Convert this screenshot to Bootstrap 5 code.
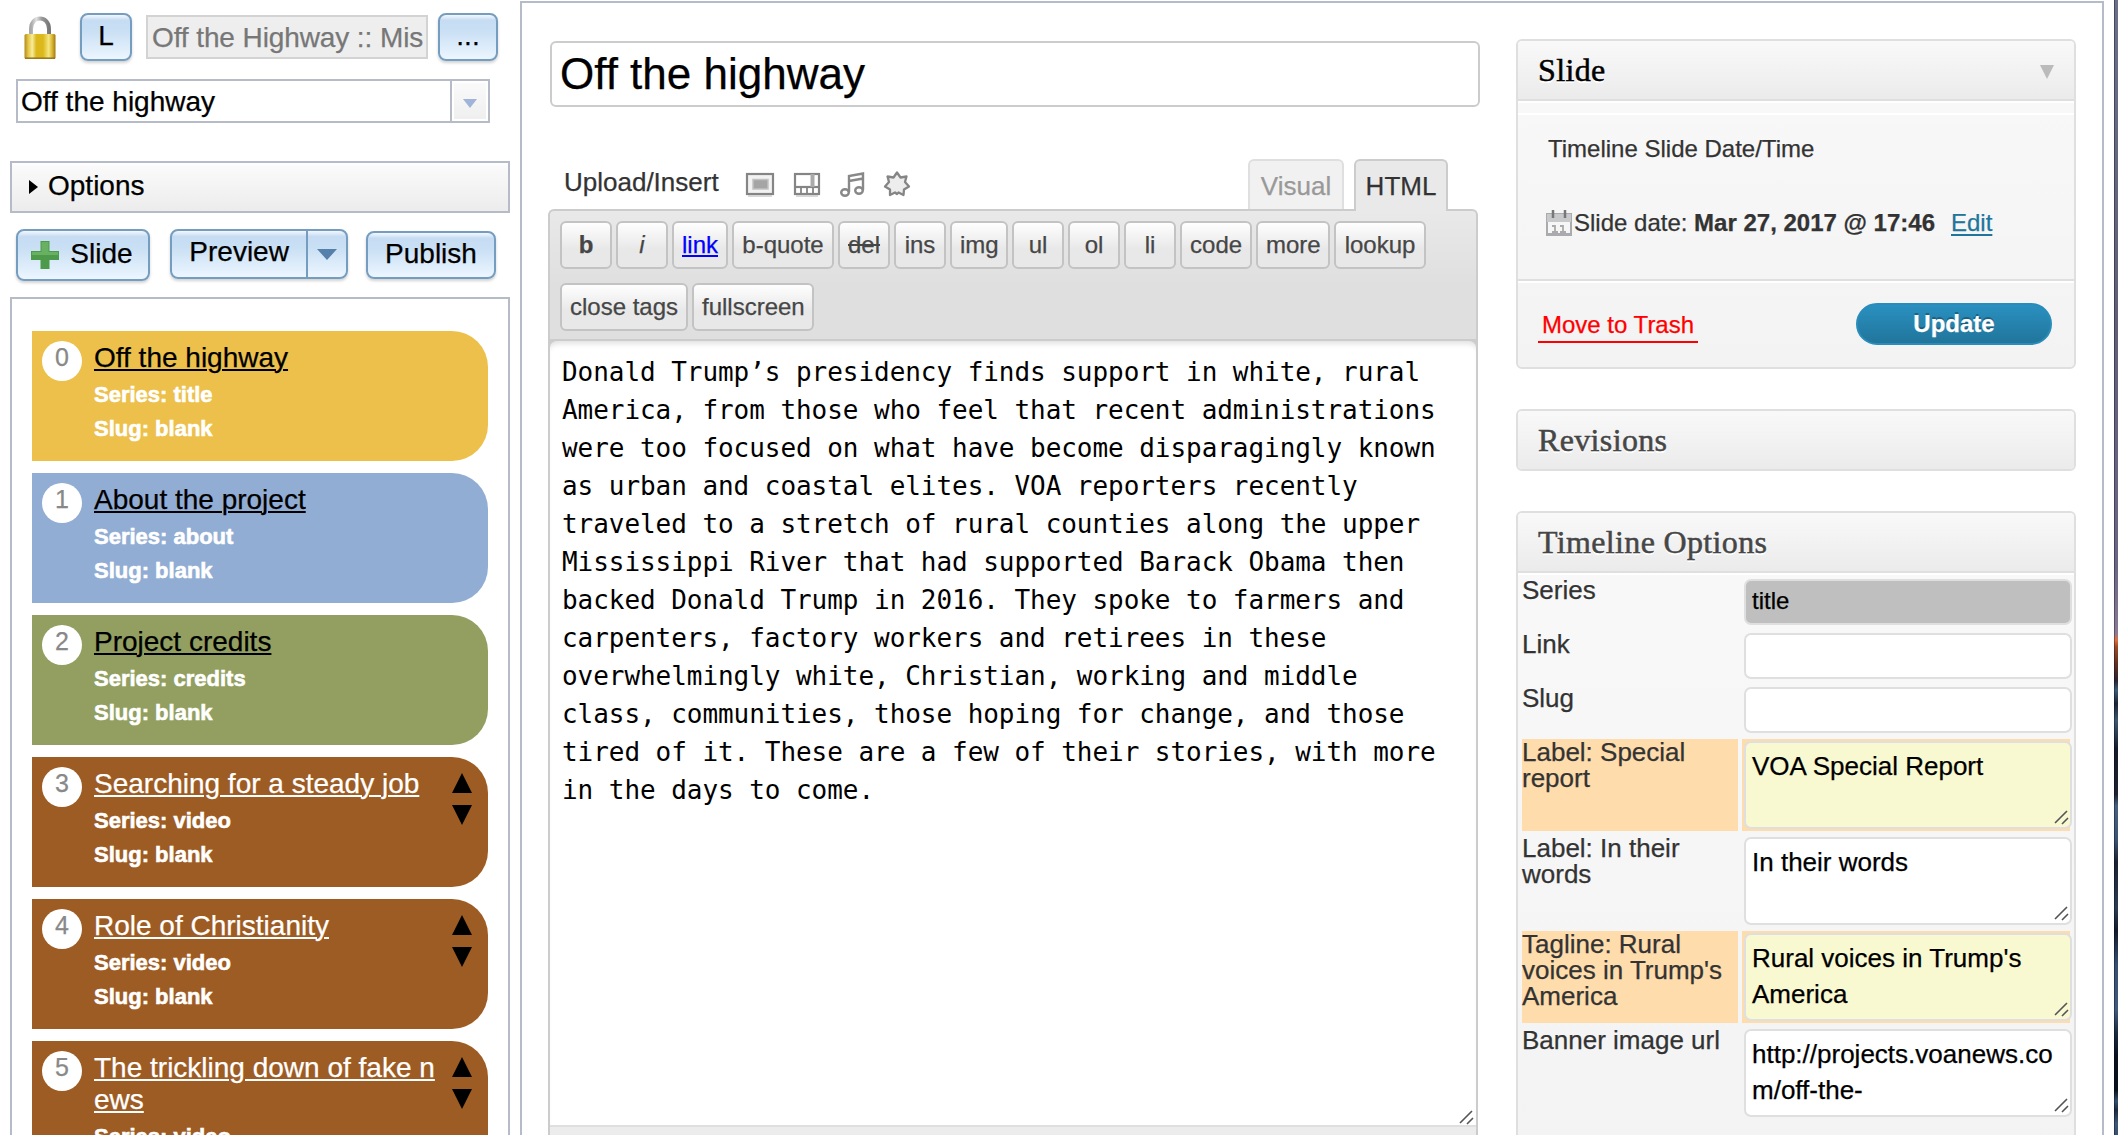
<!DOCTYPE html>
<html lang="en">
<head>
<meta charset="utf-8">
<title>Off the highway</title>
<link href="https://cdn.jsdelivr.net/npm/bootstrap@5.3.0/dist/css/bootstrap.min.css" rel="stylesheet">
<style>
html,body{height:1135px;overflow:hidden}
body{font-family:"Liberation Sans",Arial,sans-serif;color:#333;background:#fff;font-size:26px;line-height:1.2;-webkit-text-stroke:.25px}
svg{display:block;flex:none}
.side{width:520px;flex:none;color:#000;font-size:28px;line-height:32px}
.dj{display:flex;align-items:center;justify-content:center;flex:none;height:48px;border:2px solid #759dc0;border-radius:8px;padding:0 0 3px;font-size:28px;line-height:32px;color:#000;background:linear-gradient(#f4f8fd 0,#c5dcf3 12%,#c9dff4 35%,#ecf6ff 100%);box-shadow:0 2px 3px rgba(0,0,0,.18)}
.toprow{margin:13px 0 0 24px;height:48px}
.bound{border:2px solid #b5bcc7;border-radius:0}
.proj{width:282px;height:44px;margin:0 10px 0 14px;padding:1px 0 0 4px;border:2px solid #d3d3d3;background:#eee;color:#777;overflow:hidden;white-space:nowrap;line-height:40px;letter-spacing:-.1px}
.combo{width:474px;height:44px;margin:18px 0 0 16px}
.combo .val{padding-left:3px;line-height:42px}
.combo .arr{width:38px;border-left:2px solid #b5bcc7;padding:2px}
.combo .arr span{background:linear-gradient(#fafafa,#efefef);display:flex;width:100%;height:100%;align-items:center;justify-content:center}
.optbar{width:500px;height:52px;margin:38px 0 0 10px;padding:0 0 3px 17px;background:linear-gradient(#fff 0,#fafafa 8%,#ececec 100%)}
.actions{margin:16px 0 0 16px;height:52px}
.slides{width:500px;margin:16px 0 0 10px;padding:32px 20px 0;height:840px;border:2px solid #b5bcc7;gap:12px}
.slide-item{width:456px;height:130px;flex:none;border-radius:0 36px 36px 0;padding:10px;color:#fff;font-size:22px;font-weight:700;line-height:34px;overflow:hidden;-webkit-text-stroke:.6px}
.slide-item a{display:block;color:inherit;font-size:28px;font-weight:400;line-height:32px;margin:1px 0 4px;text-underline-offset:2px;text-decoration-thickness:2px;word-break:break-all;-webkit-text-stroke:.25px}
.slide-item .ttl{color:#000}
.num{width:40px;height:40px;border-radius:50%;background:#fff;color:#888;font-size:25px;font-weight:400;text-align:center;line-height:33px;flex:none;margin-right:12px;-webkit-text-stroke:.25px}
.txt{width:346px}
.updown{margin:6px 0 0 12px}
.brown{background:#9d5c23}
.pane{margin:1px 10px 0 0;height:1140px;border:2px solid #b5bcc7;width:1584px;flex:none}
.centre{width:932px;margin-left:26px;flex:none}
.title-in{margin:38px 0 0 2px;height:66px;width:930px;border:2px solid #ccc;border-radius:6px;color:#000;font-size:44px;line-height:61px;padding:0 0 0 8px}
.tabsrow{height:52px;margin:52px 32px -2px 16px;position:relative}
.up{line-height:36px;width:182px;padding-top:5px}
.tabx{height:52px;border:2px solid #ccc;border-bottom:0;border-radius:6px 6px 0 0;background:#e9e9e9;text-align:center;font-size:26px;color:#333;padding-top:2px;line-height:46px}
.tabx.off{height:50px;background:#f1f1f1;border-color:#dfdfdf;color:#999;margin-right:10px}
.edbox{width:930px}
.toolb{height:130px;border:2px solid #ccc;border-bottom:0;border-radius:6px 6px 0 0;background:linear-gradient(#e9e9e9 0,#dfdfdf 75px);padding:10px 10px 0;gap:14px 4px;align-content:flex-start}
.qt{height:48px;min-width:52px;border:2px solid #c3c3c3;border-radius:6px;background:linear-gradient(#fefefe,#e8e8e8 60%);color:#464646;font-size:24px;line-height:43px;padding:0 8px;text-align:center;white-space:nowrap}
.ta-wrap{position:relative;height:788px;border:2px solid #ccc;border-width:0 2px;background:#ccc}
.ta{height:788px;border-bottom:2px solid #dfdfdf;border-top:2px solid #ccc;background:#fff;border-radius:8px 8px 0 0;box-shadow:inset 0 6px 5px -3px #e3e3e3;padding:12px 40px 0 12px;color:#000;font:26px/38px "DejaVu Sans Mono","Liberation Mono",monospace;letter-spacing:-.052px;-webkit-text-stroke:0}
.grip{position:absolute;right:2px;bottom:2px}
.status{height:20px;border:2px solid #ccc;border-width:0 2px;background:#ececec}
.right-col{width:560px;margin:36px 0 0 36px;flex:none}
.box{border:2px solid #dfdfdf;border-radius:6px;background:linear-gradient(#f9f9f9,#f3f3f3);overflow:hidden}
.hd{height:60px;border-bottom:2px solid #dfdfdf;background:linear-gradient(#f9f9f9,#ebebeb);padding:0 20px;font-family:"Liberation Serif",serif;font-size:32px;letter-spacing:.35px;line-height:59px;color:#464646;-webkit-text-stroke:.5px;text-shadow:0 2px 0 #fff}
.sb{font-size:24px;line-height:28px}
.upd{width:196px;height:42px;border-radius:21px;border:2px solid #298cba;background:linear-gradient(#2a90c0,#21759b);color:#fff;font-weight:700;font-size:24px;line-height:37px;text-align:center;text-shadow:0 -2px 0 rgba(0,0,0,.3)}
.trash{color:red;border-bottom:2px solid red;padding:2px 0 0 4px;height:34px;width:160px;line-height:28px;white-space:nowrap}
.opt{margin:0 4px 4px}
.opt .lab{width:216px;line-height:26px;font-size:26px;flex:none;margin-right:4px}
.opt .cell{width:328px;padding:2px;flex:none}
.fld{position:relative;width:328px;height:46px;border:2px solid #dfdfdf;border-radius:7px;background:#fff;color:#000;font-size:24px;line-height:40px;padding:0 0 0 6px}
.fld.area{height:88px;font-size:26px;line-height:36px;padding:5px 14px 0 6px;word-break:break-all}
.hl .lab,.hl .cell{background:#fedcab}
.hl .fld{background:#f9f9d1}
.desk{width:4px;flex:none;background:linear-gradient(#6b7088 0,#615f78 28%,#6c6686 50%,#8b7b93 55.8%,#e0703a 56.4%,#9c4a28 57%,#61301f 58.5%,#2c2430 60%,#3e5c7a 60.8%,#1c2433 62%,#3d5872 63.5%,#161b27 66%,#20222f 70%,#46617f 71%,#3b5370 74%,#1b222f 76%,#2b3c52 80%,#131b29 82%,#355072 85%,#405a7a 89%,#1b2a40 91%,#0b121e 93%,#08101a 96%,#35506f 97%,#1c2a3e 97.8%,#3d5878 99%,#38516f 100%);box-shadow:inset 1px 0 0 rgba(0,0,30,.35)}
</style>
<script src="https://cdn.jsdelivr.net/npm/bootstrap@5.3.0/dist/js/bootstrap.bundle.min.js"></script>
</head>
<body class="d-flex align-items-stretch">
<svg width="0" height="0" class="position-absolute"><defs>
<g id="gr" fill="none" stroke="#555" stroke-width="1.6"><path d="M1 13L13 1M8 14L14 8"/></g>
<g id="ud"><path d="M0 20L10 0L20 20ZM0 32H20L10 52Z"/></g>
</defs></svg>

<aside class="side">
  <div class="toprow d-flex align-items-center">
    <svg width="32" height="44" viewBox="0 0 32 44"><defs><linearGradient id="gold"><stop offset="0" stop-color="#b08a1c"/><stop offset=".12" stop-color="#e6c544"/><stop offset=".25" stop-color="#f6ec9c"/><stop offset=".38" stop-color="#dcb81c"/><stop offset=".6" stop-color="#dcb81c"/><stop offset=".78" stop-color="#f5e680"/><stop offset=".9" stop-color="#d8b22c"/><stop offset="1" stop-color="#9c7814"/></linearGradient><linearGradient id="steel"><stop offset="0" stop-color="#a8a8a8"/><stop offset=".3" stop-color="#e2e2e2"/><stop offset=".6" stop-color="#9a9a9a"/><stop offset="1" stop-color="#777"/></linearGradient></defs><path d="M7 20V14C7 0 25 0 25 14V20" fill="none" stroke="url(#steel)" stroke-width="4"/><rect x="0.500" y="19" width="31" height="25" rx="1.500" fill="url(#gold)"/><path d="M1 43.200H31" stroke="#96741c" stroke-width="1.500"/></svg>
    <div class="dj" style="width:52px;margin-left:24px">L</div>
    <div class="proj">Off the Highway :: Mis</div>
    <div class="dj" style="width:60px">...</div>
  </div>
  <div class="combo bound d-flex justify-content-between"><div class="val">Off the highway</div><div class="arr"><span><svg width="14" height="9" style="margin-top:4px"><path d="M0 0H14L7 9Z" fill="#9fb4d8"/></svg></span></div></div>
  <div class="optbar bound d-flex align-items-center"><svg width="9" height="14" style="margin:2px 10px 0 0"><path d="M0 0L9 7L0 14Z"/></svg>Options</div>
  <div class="actions d-flex align-items-start">
    <div class="dj" style="width:134px;height:52px"><svg width="28" height="28" style="margin:2px 11px 0 -2px"><path d="M9.500 0H18.500V10H28V19H18.500V28H9.500V19H0V10H9.500Z" fill="#4c9a4a"/><path d="M10.500 1H17.500V11H27V14H1V11H10.500Z" fill="#68b062"/></svg>Slide</div>
    <div class="dj" style="width:178px;height:50px;margin-left:20px;padding:0"><div class="text-center" style="width:135px;padding:0 0 5px">Preview</div><div class="d-flex align-items-center justify-content-center" style="width:40px;height:46px;border-left:2px solid #759dc0"><svg width="20" height="11"><path d="M0 0H20L10 11Z" fill="#5580ab"/></svg></div></div>
    <div class="dj" style="margin:2px 0 0 18px;width:130px">Publish</div>
  </div>
  <div class="slides d-flex flex-column">
    <div class="slide-item d-flex align-items-start" style="background:#ecc04a"><div class="num">0</div><div class="txt"><a href="#" class="ttl">Off the highway</a>Series: title<br>Slug: blank</div></div>
    <div class="slide-item d-flex align-items-start" style="background:#92add3"><div class="num">1</div><div class="txt"><a href="#" class="ttl">About the project</a>Series: about<br>Slug: blank</div></div>
    <div class="slide-item d-flex align-items-start" style="background:#929f60"><div class="num">2</div><div class="txt"><a href="#" class="ttl">Project credits</a>Series: credits<br>Slug: blank</div></div>
    <div class="slide-item brown d-flex align-items-start"><div class="num">3</div><div class="txt"><a href="#">Searching for a steady job</a>Series: video<br>Slug: blank</div><svg class="updown" width="20" height="52"><use href="#ud"/></svg></div>
    <div class="slide-item brown d-flex align-items-start"><div class="num">4</div><div class="txt"><a href="#">Role of Christianity</a>Series: video<br>Slug: blank</div><svg class="updown" width="20" height="52"><use href="#ud"/></svg></div>
    <div class="slide-item brown d-flex align-items-start"><div class="num">5</div><div class="txt"><a href="#">The trickling down of fake news</a>Series: video</div><svg class="updown" width="20" height="52"><use href="#ud"/></svg></div>
  </div>
</aside>

<main class="pane d-flex align-items-start">
  <section class="centre">
    <div class="title-in">Off the highway</div>
    <div class="tabsrow d-flex align-items-start">
      <div class="up">Upload/Insert</div>
      <svg width="170" height="34" viewBox="735 165 170 34" style="margin:6px 0 0 -11px;overflow:visible">
        <g fill="none" stroke="#858585" stroke-width="2.200"><rect x="747" y="174" width="26" height="20" fill="#f2f2f2"/><rect x="753" y="179.500" width="15" height="9.500" fill="#a5a5a5" stroke="#c2c2c2" stroke-width="1.500"/>
        <rect x="795" y="174" width="24" height="20" fill="#fff"/><path d="M795 187H819"/><path d="M812.500 174V187" stroke="#aaa" stroke-width="4"/><path d="M801 188V194M807 188V194M813 188V194" stroke-width="1.800"/></g>
        <path d="M748 196H772M796 196H818" stroke="#ccc" stroke-width="1.500"/>
        <g fill="none" stroke="#888" stroke-width="2.400"><ellipse cx="845" cy="192.500" rx="3.800" ry="3.200"/><ellipse cx="859" cy="190.500" rx="3.800" ry="3.200"/><path d="M849 192V176L863 173.500V190M849 181L863 178.500"/></g>
        <path d="M897 172.500L900.500 177.500L906.500 176.500L905 182L909 186.500L904 189.500L903.500 195L898.500 192.500L897 194L895 192.500L890 195L890 189.500L885 186.500L889 182L887.500 176.500L893.500 177.500Z" fill="#ededed" stroke="#858585" stroke-width="2.300" stroke-linejoin="round"/>
      </svg>
      <div class="tabx off ms-auto" style="width:96px">Visual</div>
      <div class="tabx" style="width:94px">HTML</div>
    </div>
    <div class="edbox">
      <div class="toolb d-flex flex-wrap">
        <div class="qt fw-bold">b</div><div class="qt fst-italic">i</div><div class="qt" style="color:#00f;text-decoration:underline;width:56px">link</div><div class="qt" style="width:102px">b-quote</div><div class="qt" style="text-decoration:line-through">del</div><div class="qt">ins</div><div class="qt" style="width:58px">img</div><div class="qt">ul</div><div class="qt">ol</div><div class="qt">li</div><div class="qt" style="width:72px">code</div><div class="qt" style="width:74px">more</div><div class="qt" style="width:92px">lookup</div>
        <div class="qt" style="width:128px">close tags</div><div class="qt" style="width:122px">fullscreen</div>
      </div>
      <div class="ta-wrap"><div class="ta">Donald Trump’s presidency finds support in white, rural America, from those who feel that recent administrations were too focused on what have become disparagingly known as urban and coastal elites. VOA reporters recently traveled to a stretch of rural counties along the upper Mississippi River that had supported Barack Obama then backed Donald Trump in 2016. They spoke to farmers and carpenters, factory workers and retirees in these overwhelmingly white, Christian, working and middle class, communities, those hoping for change, and those tired of it. These are a few of their stories, with more in the days to come.</div><svg class="grip" width="15" height="15"><use href="#gr"/></svg></div>
      <div class="status"></div>
    </div>
  </section>

  <section class="right-col">
    <div class="box" style="height:330px">
      <div class="hd d-flex justify-content-between" style="color:#000">Slide<svg width="14" height="14" style="margin:24px 0 0"><path d="M0 0H14L7 14Z" fill="#bbb"/></svg></div>
      <div class="sb">
        <div style="height:14px;border:solid #fff;border-width:2px 0;background:#f8f8f8"></div>
        <div style="padding:20px 30px 0">Timeline Slide Date/Time</div>
        <div class="d-flex align-items-center" style="padding:46px 0 0 28px"><svg width="26" height="26" style="margin-right:2px"><path d="M0 3H26V26H0Z" fill="#a9abae"/><path d="M2 12H24V23H2Z" fill="#f6f6f6"/><path d="M1 4H25V12H1Z" fill="#c8c9cb"/><path d="M7 0V8M19 0V8" stroke="#777" stroke-width="2.500"/><path d="M6 16H9V22M6 22H12M14 16H17V22M14 22H20" fill="none" stroke="#aaa" stroke-width="1.800"/></svg><span>Slide date: <b>Mar 27, 2017 @ 17:46</b></span><a href="#" style="color:#21759b;margin-left:16px;text-decoration-thickness:2px;text-underline-offset:3px">Edit</a></div>
        <div style="height:42px"></div>
        <div class="d-flex justify-content-between" style="border-top:2px solid #dfdfdf;box-shadow:inset 0 2px 0 #fff;padding:22px 22px 0 20px;height:88px"><div class="trash" style="margin-top:6px">Move to Trash</div><div class="upd">Update</div></div>
      </div>
    </div>
    <div class="box" style="height:62px;margin-top:40px"><div class="hd">Revisions</div></div>
    <div class="box" style="height:660px;margin-top:40px">
      <div class="hd">Timeline Options</div>
      <div style="height:4px;border-top:2px solid #fff"></div>
      <div class="opt d-flex"><div class="lab">Series</div><div class="cell"><div class="fld" style="background:#bfbfbf">title</div></div></div>
      <div class="opt d-flex"><div class="lab">Link</div><div class="cell"><div class="fld"></div></div></div>
      <div class="opt d-flex"><div class="lab">Slug</div><div class="cell"><div class="fld"></div></div></div>
      <div class="opt d-flex hl"><div class="lab">Label: Special report</div><div class="cell"><div class="fld area">VOA Special Report<svg class="grip" style="right:1px;bottom:2px" width="15" height="15"><use href="#gr"/></svg></div></div></div>
      <div class="opt d-flex"><div class="lab">Label: In their words</div><div class="cell"><div class="fld area">In their words<svg class="grip" style="right:1px;bottom:2px" width="15" height="15"><use href="#gr"/></svg></div></div></div>
      <div class="opt d-flex hl"><div class="lab">Tagline: Rural voices in Trump's America</div><div class="cell"><div class="fld area" style="word-break:normal">Rural voices in Trump's America<svg class="grip" style="right:1px;bottom:2px" width="15" height="15"><use href="#gr"/></svg></div></div></div>
      <div class="opt d-flex"><div class="lab">Banner image url</div><div class="cell"><div class="fld area">http://projects.voanews.com/off-the-<svg class="grip" style="right:1px;bottom:2px" width="15" height="15"><use href="#gr"/></svg></div></div></div>
    </div>
  </section>
</main>
<div class="desk"></div>
</body>
</html>
